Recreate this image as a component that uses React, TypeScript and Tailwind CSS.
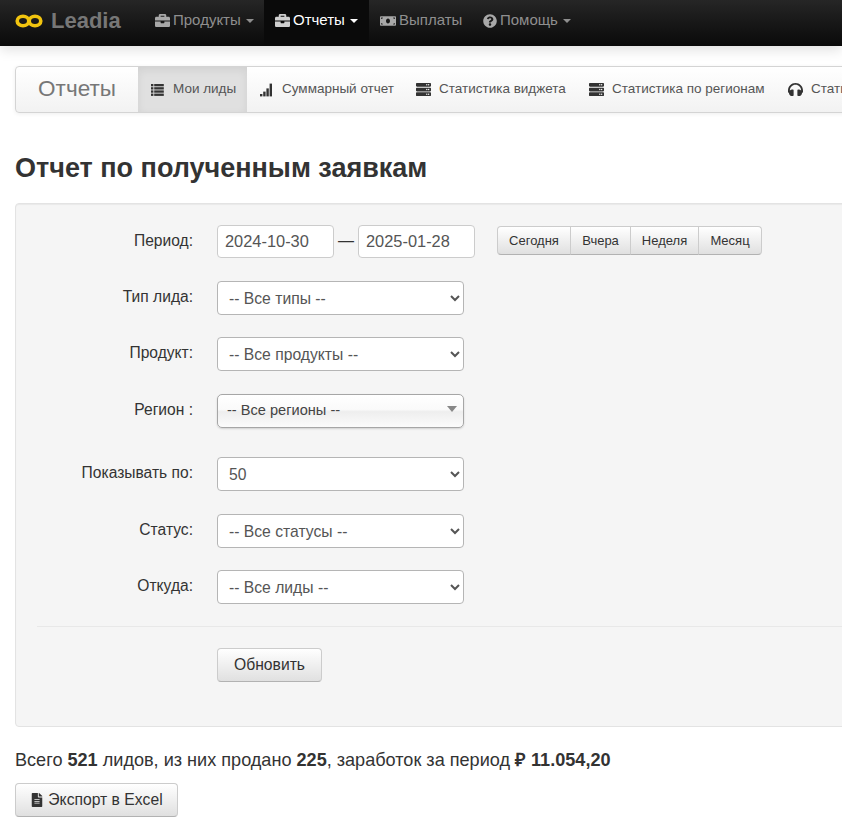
import { FaBriefcase, FaMoneyBill, FaQuestionCircle, FaServer, FaHeadphones, FaFileAlt } from "react-icons/fa";
import type { ReactNode } from "react";

const font = "font-['Liberation_Sans','Helvetica_Neue',Arial,sans-serif]";

const Caret = ({ className }: { className: string }) => (
  <span className={`ml-[2px] inline-block h-0 w-0 border-x-4 border-t-4 border-x-transparent ${className}`} />
);

const SignalIcon = () => (
  <svg width="14" height="14" viewBox="0 0 14 14" fill="#333">
    <rect x="1" y="11" width="2.4" height="2.4" />
    <rect x="4.2" y="8.6" width="2.4" height="4.8" />
    <rect x="7.4" y="5.4" width="2.4" height="8" />
    <rect x="10.6" y="0.6" width="2.4" height="12.8" />
  </svg>
);

const ListIcon = () => (
  <svg width="14" height="14" viewBox="0 0 14 14" fill="#333">
    <rect x="1" y="1" width="2.4" height="2.3" />
    <rect x="4.2" y="1" width="9.6" height="2.3" />
    <rect x="1" y="4.2" width="2.4" height="2.3" />
    <rect x="4.2" y="4.2" width="9.6" height="2.3" />
    <rect x="1" y="7.4" width="2.4" height="2.3" />
    <rect x="4.2" y="7.4" width="9.6" height="2.3" />
    <rect x="1" y="10.6" width="2.4" height="2.3" />
    <rect x="4.2" y="10.6" width="9.6" height="2.3" />
  </svg>
);

const Logo = () => (
  <svg width="28" height="14" viewBox="0 0 28 14" fill="none" stroke="#f1c40f" strokeWidth="3.6">
    <ellipse cx="8" cy="7" rx="5.8" ry="4.7" />
    <ellipse cx="20" cy="7" rx="5.8" ry="4.7" />
  </svg>
);

const navItems: { title: string; icon: ReactNode; caret?: boolean; active?: boolean; cls: string }[] = [
  { title: "Продукты", icon: <FaBriefcase size={15} />, caret: true, cls: "w-[119px] pl-[10px]" },
  { title: "Отчеты", icon: <FaBriefcase size={15} />, caret: true, active: true, cls: "w-[105px] pl-[11px]" },
  { title: "Выплаты", icon: <FaMoneyBill size={16} />, cls: "w-[103px] pl-[11px]" },
  { title: "Помощь", icon: <FaQuestionCircle size={14} />, caret: true, cls: "w-[110px] pl-[11px]" },
];

const tabs: { title: string; icon: ReactNode; active?: boolean; w: string }[] = [
  { title: "Мои лиды", icon: <ListIcon />, active: true, w: "w-[109px]" },
  { title: "Суммарный отчет", icon: <SignalIcon />, w: "w-[157px]" },
  { title: "Статистика виджета", icon: <FaServer size={15} />, w: "w-[173px]" },
  { title: "Статистика по регионам", icon: <FaServer size={15} />, w: "w-[199px]" },
  { title: "Статистика звонков", icon: <FaHeadphones size={15} />, w: "w-[180px]" },
];

const ranges = [
  { title: "Сегодня", cls: "w-[74px] rounded-r-none" },
  { title: "Вчера", cls: "-ml-px w-[61px] rounded-none" },
  { title: "Неделя", cls: "-ml-px w-[69px] rounded-none" },
  { title: "Месяц", cls: "-ml-px w-[64px] rounded-l-none" },
];

const Row = ({ label, mb, children }: { label: string; mb: string; children: ReactNode }) => (
  <div className={`flex items-start ${mb}`}>
    <label className="w-[162px] shrink-0 pt-[6px] text-right text-[15.6px] leading-[20px] text-[#333]">{label}</label>
    <div className="ml-[24px] flex items-start">{children}</div>
  </div>
);

const NativeSelect = ({ value }: { value: string }) => (
  <select
    defaultValue={value}
    className="h-[34px] w-[247px] rounded-[4px] border border-[#b5b5b5] bg-white px-[7px] text-[15.7px] text-[#555]"
  >
    <option>{value}</option>
  </select>
);

const DateInput = ({ value }: { value: string }) => (
  <input
    defaultValue={value}
    className="h-[33px] w-[117px] rounded-[4px] border border-[#ccc] bg-white px-[7px] text-[16.4px] text-[#555]"
  />
);

const btn =
  "rounded-[4px] border border-[#ccc] border-b-[#b2b2b2] bg-gradient-to-b from-white to-[#e0e0e0] leading-[20px] text-[#333]";

export default function App() {
  return (
    <div className={`${font} w-full overflow-hidden bg-white pb-[18px] text-[14px] text-[#333]`}>
      {/* Navbar */}
      <nav className="flex h-[46px] items-center bg-gradient-to-b from-[#262626] to-[#0a0a0a] pl-[15px] shadow-[0_4px_12px_rgba(0,0,0,0.12)]">
        <div className="flex h-full items-center pb-[5px]">
          <Logo />
          <span className="ml-[8px] w-[94px] text-[22px] font-bold text-[#777]">Leadia</span>
        </div>
        <ul className="flex h-full">
          {navItems.map((item) => (
            <li
              key={item.title}
              className={`flex h-full shrink-0 items-center gap-[3px] pb-[5px] text-[15px] ${item.cls} ${
                item.active ? "bg-[#0a0a0a] text-white" : "text-[#8f8f8f]"
              }`}
            >
              <span className={item.active ? "text-[#cfcfcf]" : "text-[#a8a8a8]"}>{item.icon}</span>
              {item.title}
              {item.caret && <Caret className={item.active ? "border-t-white" : "border-t-[#8f8f8f]"} />}
            </li>
          ))}
        </ul>
      </nav>

      {/* Sub navigation */}
      <div className="mt-[20px] ml-[15px] flex h-[47px] w-[1000px] rounded-[4px] border border-[#d4d4d4] bg-gradient-to-b from-white to-[#f2f2f2] shadow-[0_1px_4px_rgba(0,0,0,0.07)]">
        <div className="flex w-[122px] shrink-0 items-center justify-center pb-[2px] text-[22.5px] text-[#777]">Отчеты</div>
        {tabs.map((tab) => (
          <div
            key={tab.title}
            className={`flex shrink-0 items-center gap-[9px] pl-[12px] text-[13.5px] text-[#555] ${tab.w} ${
              tab.active ? "bg-[#e0e0e0] shadow-[inset_0_3px_9px_rgba(0,0,0,0.07)]" : ""
            }`}
          >
            <span className="w-[14px] text-[#333]">{tab.icon}</span>
            <span className="pb-[1px] whitespace-nowrap">{tab.title}</span>
          </div>
        ))}
      </div>

      <h1 className="mt-[40px] ml-[15px] text-[27px] leading-[30px] font-bold text-[#333]">Отчет по полученным заявкам</h1>

      {/* Filters */}
      <div className="mt-[20px] ml-[15px] h-[524px] w-[1000px] rounded-[4px] border border-[#e3e3e3] bg-[#f5f5f5] pt-[21px] pl-[15px] shadow-[inset_0_1px_1px_rgba(0,0,0,0.05)]">
        <Row label="Период:" mb="mb-[23px]">
          <DateInput value="2024-10-30" />
          <span className="w-[24px] pt-[6px] text-center text-[16px] leading-[20px]">—</span>
          <DateInput value="2025-01-28" />
          <div className="mt-[1px] ml-[22px] flex">
            {ranges.map((r) => (
              <button key={r.title} className={`${btn} h-[29px] text-[13px] ${r.cls}`}>
                {r.title}
              </button>
            ))}
          </div>
        </Row>
        <Row label="Тип лида:" mb="mb-[22px]">
          <NativeSelect value="-- Все типы --" />
        </Row>
        <Row label="Продукт:" mb="mb-[23px]">
          <NativeSelect value="-- Все продукты --" />
        </Row>
        <Row label="Регион :" mb="mb-[29px]">
          <div className="relative h-[34px] w-[247px] rounded-[5px] border border-[#a6a6a6] bg-[linear-gradient(to_bottom,#fff_0%,#fafafa_45%,#eee_52%,#fbfbfb_100%)] pl-[9px] text-[14.6px] leading-[30px] text-[#444] shadow-[0_1px_2px_rgba(0,0,0,0.15)]">
            -- Все регионы --
            <span className="absolute top-[11px] right-[6px] h-0 w-0 border-x-[5px] border-t-[6px] border-x-transparent border-t-[#888]" />
          </div>
        </Row>
        <Row label="Показывать по:" mb="mb-[23px]">
          <NativeSelect value="50" />
        </Row>
        <Row label="Статус:" mb="mb-[22px]">
          <NativeSelect value="-- Все статусы --" />
        </Row>
        <Row label="Откуда:" mb="mb-[22px]">
          <NativeSelect value="-- Все лиды --" />
        </Row>
        <hr className="ml-[6px] border-t border-[#e8e8e8]" />
        <div className="mt-[21px] ml-[186px]">
          <button className={`${btn} h-[34px] w-[105px] text-[15.7px]`}>Обновить</button>
        </div>
      </div>

      <p className="mt-[22px] ml-[15px] text-[18.1px] leading-[22px] text-[#333]">
        Всего <b>521</b> лидов, из них продано <b>225</b>, заработок за период <b>₽ 11.054,20</b>
      </p>
      <button className={`${btn} mt-[12px] ml-[15px] flex h-[34px] w-[163px] items-center justify-center gap-[4px] text-[15.7px]`}>
        <FaFileAlt size={14} />
        Экспорт в Excel
      </button>
    </div>
  );
}
